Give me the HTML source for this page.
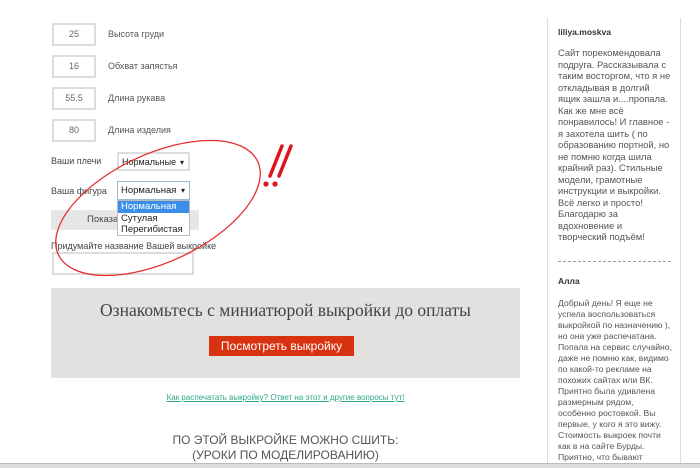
<html><head><style>
body{margin:0;width:700px;height:467px;background:#fff;position:relative;overflow:hidden;font-family:"Liberation Sans",sans-serif;color:#444}
.a{position:absolute}
.in{position:absolute;left:52px;width:40px;height:19px;border:2px solid #ddd;font-size:9px;text-align:center;line-height:19px;color:#666}
.lb{position:absolute;left:108px;font-size:9px;color:#555}
.sel{position:absolute;left:117px;width:73px;height:19px;border:1px solid #ccc;font-size:9.5px;line-height:17px;padding-left:3px;box-sizing:border-box;color:#222;background:#fff;white-space:nowrap}
.sel:after{content:"▾";position:absolute;right:4px;top:0;font-size:8px}
.side{position:absolute;left:558px;font-size:9.4px;line-height:11.5px;color:#555;white-space:nowrap}
</style></head><body>
<div class="in" style="top:23px">25</div><div class="lb" style="top:29px">Высота груди</div>
<div class="in" style="top:55px">16</div><div class="lb" style="top:61px">Обхват запястья</div>
<div class="in" style="top:87px">55.5</div><div class="lb" style="top:93px">Длина рукава</div>
<div class="in" style="top:119px">80</div><div class="lb" style="top:125px">Длина изделия</div>
<div class="a" style="left:51px;top:156px;font-size:9px">Ваши плечи</div>
<div class="sel" style="top:152px;border:2px solid #ddd;font-size:9px">Нормальные</div>
<div class="a" style="left:51px;top:186px;font-size:9px">Ваша фигура</div>
<div class="sel" style="top:181px;border:1px solid #9bc">Нормальная</div>
<div class="a" style="left:51px;top:210px;width:148px;height:20px;background:#e6e6e6;font-size:9.5px;line-height:20px;padding-left:36px;box-sizing:border-box">Показать</div>
<div class="a" style="left:117px;top:200px;width:73px;height:36px;background:#fff;border:1px solid #bbb;box-sizing:border-box;font-size:9.5px;line-height:11.5px;color:#222">
<div style="background:#3b8fe8;color:#fff;padding-left:3px">Нормальная</div><div style="padding-left:3px">Сутулая</div><div style="padding-left:3px">Перегибистая</div></div>
<div class="a" style="left:51px;top:241px;font-size:9px">Придумайте название Вашей выкройке</div>
<div class="a" style="left:52px;top:252px;width:138px;height:19px;border:2px solid #ddd"></div>
<svg class="a" style="left:0;top:0" width="540" height="290"><ellipse cx="158" cy="208" rx="110" ry="54" transform="rotate(-25 158 208)" fill="none" stroke="#e53030" stroke-width="1.3"/>
<path d="M282 146 L270 176 M291 146 L279 176" stroke="#e0141e" stroke-width="3.5" stroke-linecap="round"/>
<circle cx="266" cy="184" r="2.6" fill="#e0141e"/><circle cx="275" cy="184" r="2.6" fill="#e0141e"/></svg>
<div class="a" style="left:51px;top:288px;width:469px;height:90px;background:#e3e1e0"></div>
<div class="a" style="left:51px;top:300px;width:469px;text-align:center;font-family:'Liberation Serif',serif;font-size:17.5px;color:#444">Ознакомьтесь с миниатюрой выкройки до оплаты</div>
<div class="a" style="left:209px;top:336px;width:145px;height:20px;background:#d93211;color:#fff;font-size:12px;line-height:20px;text-align:center">Посмотреть выкройку</div>
<div class="a" style="left:51px;top:393px;width:469px;text-align:center;font-size:8px;color:#2fa78a;text-decoration:underline">Как распечатать выкройку? Ответ на этот и другие вопросы тут!</div>
<div class="a" style="left:51px;top:433px;width:469px;text-align:center;font-size:12px;line-height:15px;color:#555">ПО ЭТОЙ ВЫКРОЙКЕ МОЖНО СШИТЬ:<br>(УРОКИ ПО МОДЕЛИРОВАНИЮ)</div>
<div class="a" style="left:547px;top:18px;width:1px;height:449px;background:#ddd"></div>
<div class="a" style="left:680px;top:18px;width:1px;height:449px;background:#ddd"></div>
<div class="side" style="top:27px;font-weight:bold;font-size:8.5px;color:#333">liliya.moskva</div>
<div class="side" style="top:47px">Сайт порекомендовала<br>подруга. Рассказывала с<br>таким восторгом, что я не<br>откладывая в долгий<br>ящик зашла и....пропала.<br>Как же мне всё<br>понравилось! И главное -<br>я захотела шить ( по<br>образованию портной, но<br>не помню когда шила<br>крайний раз). Стильные<br>модели, грамотные<br>инструкции и выкройки.<br>Всё легко и просто!<br>Благодарю за<br>вдохновение и<br>творческий подъём!</div>
<div class="a" style="left:558px;top:261px;width:113px;border-top:1px dashed #999"></div>
<div class="side" style="top:276px;font-weight:bold;font-size:8.5px;color:#333">Алла</div>
<div class="side" style="top:298px;font-size:8.6px;line-height:11px">Добрый день! Я еще не<br>успела воспользоваться<br>выкройкой по назначению ),<br>но она уже распечатана.<br>Попала на сервис случайно,<br>даже не помню как, видимо<br>по какой-то рекламе на<br>похожих сайтах или ВК.<br>Приятно была удивлена<br>размерным рядом,<br>особенно ростовкой. Вы<br>первые, у кого я это вижу.<br>Стоимость выкроек почти<br>как в на сайте Бурды.<br>Приятно, что бывают</div>
<div class="a" style="left:0;top:463px;width:700px;height:4px;background:#ddd;border-top:1px solid #bbb"></div>
</body></html>
